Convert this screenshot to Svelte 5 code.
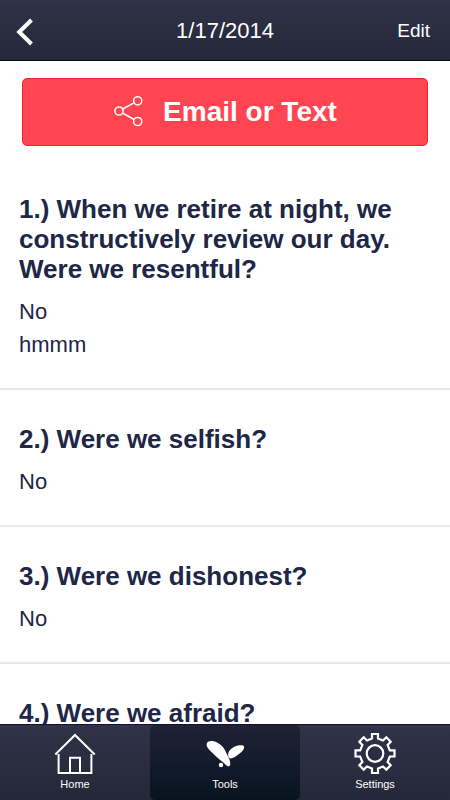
<script lang="ts">
  interface Question {
    id: number;
    text: string;
    answers: string[];
  }

  let date = '1/17/2014';
  let activeTab = 'Tools';

  const questions: Question[] = [
    {
      id: 1,
      text: 'When we retire at night, we constructively review our day. Were we resentful?',
      answers: ['No', 'hmmm'],
    },
    { id: 2, text: 'Were we selfish?', answers: ['No'] },
    { id: 3, text: 'Were we dishonest?', answers: ['No'] },
    { id: 4, text: 'Were we afraid?', answers: [] },
  ];

  const tabs = ['Home', 'Tools', 'Settings'];
</script>

<div class="screen">
  <header>
    <button class="back" aria-label="Back">
      <svg viewBox="0 0 18 28" fill="none" stroke="currentColor" stroke-width="4">
        <path d="M15.5 2 3.2 14 15.5 26" />
      </svg>
    </button>
    <h1>{date}</h1>
    <button class="edit">Edit</button>
  </header>

  <main>
    <button class="share">
      <svg viewBox="0 0 30 32" fill="none" stroke="currentColor" stroke-width="1.5">
        <circle cx="6" cy="15" r="4.1" />
        <circle cx="24.7" cy="4.8" r="4.1" />
        <circle cx="24.7" cy="25.5" r="4.1" />
        <path d="M9.7 13 21 6.8M9.7 17.1 21 23.5" />
      </svg>
      <span>Email or Text</span>
    </button>

    {#each questions as question (question.id)}
      <section>
        <h2>{question.id}.) {question.text}</h2>
        {#each question.answers as answer}
          <p>{answer}</p>
        {/each}
      </section>
    {/each}
  </main>

  <nav>
    {#each tabs as tab}
      <button class="tab" class:active={activeTab === tab} on:click={() => (activeTab = tab)}>
        {#if tab === 'Home'}
          <svg viewBox="0 0 44 44" fill="none" stroke="currentColor" stroke-width="2">
            <path d="M2.3 23.5 22 4 41.7 23.5" />
            <path d="M5.6 23V42H38.4V23" />
            <path d="M17 42V26.8H27V42" />
          </svg>
        {:else if tab === 'Tools'}
          <svg viewBox="0 0 44 44" fill="currentColor">
            <path d="M3.6 13C4.2 10 7.5 9.8 9.5 10C13 10.4 18.5 13.5 21 17.5C23 21 24.3 24 25.6 26.5C27.3 30 27.8 33.3 26.6 35C25.4 36 23.7 34.8 22.3 33.4C19.5 30.5 14.5 27 10.3 22.7C7 19.5 3.2 16.5 3.6 13Z" />
            <path d="M41.1 15.8C41.5 19 37.5 22.2 34 24.6C31.5 26.6 28.5 28.2 26.5 27C24.6 25.5 24.8 21.5 26.8 19.2C29.5 16.3 33 14.8 36.5 14.3C38.5 14 40.8 14.2 41.1 15.8Z" />
            <circle cx="18" cy="34" r="2.2" />
          </svg>
        {:else}
          <svg viewBox="0 0 44 44" fill="none" stroke="currentColor" stroke-width="2.2">
            <circle cx="22" cy="22.5" r="8.3" />
            <path
              d="M19 3H25V7.4L30 9.5L33.3 6.3L37.7 10.7L34.6 14L36.8 19.3H41.5V25.5H36.8L34.6 31L37.7 34.2L33.3 38.6L30 35.5L25 37.6V42H19V37.6L14 35.5L10.7 38.6L6.3 34.2L9.4 31L7.2 25.5H2.5V19.3H7.2L9.4 14L6.3 10.7L10.7 6.3L14 9.5L19 7.4Z"
            />
          </svg>
        {/if}
        <span>{tab}</span>
      </button>
    {/each}
  </nav>
</div>

<style>
  :global(body) {
    margin: 0;
    background: #fff;
  }

  .screen {
    display: flex;
    flex-direction: column;
    height: 100vh;
    color: #202645;
    font-family: 'Liberation Sans', Arial, sans-serif;
  }

  button {
    margin: 0;
    border: none;
    background: none;
    color: #fff;
    font-family: inherit;
    cursor: pointer;
  }

  svg {
    display: block;
    flex-shrink: 0;
  }

  header {
    display: grid;
    grid-template-columns: 1fr auto 1fr;
    align-items: center;
    height: 60px;
    flex-shrink: 0;
    border-bottom: 1px solid #05060f;
    background: linear-gradient(#303349, #252838);
    color: #fff;
  }

  h1 {
    margin: 0;
    font-size: 22px;
    font-weight: 400;
    line-height: 62px;
  }

  .back {
    justify-self: start;
    padding: 2px 16px 0;
  }

  .back svg {
    width: 18px;
    height: 28px;
  }

  .edit {
    justify-self: end;
    padding: 0 20px;
    font-size: 19px;
    line-height: 60px;
  }

  main {
    flex: 1;
    min-height: 0;
    overflow-y: auto;
    scrollbar-width: none;
  }

  .share {
    display: flex;
    align-items: center;
    justify-content: center;
    gap: 20px;
    width: calc(100% - 44px);
    height: 68px;
    margin: 17px 22px 14px;
    padding: 0;
    border: 1px solid #fb2138;
    border-radius: 5px;
    background: #ff4452;
    font-size: 28px;
    font-weight: 700;
  }

  .share svg {
    width: 30px;
    height: 32px;
  }

  section {
    padding: 34px 19px 27px;
    border-bottom: 2px solid #e8e8e8;
  }

  h2 {
    margin: 0 0 11px;
    font-size: 26px;
    font-weight: 700;
    line-height: 30px;
  }

  p {
    margin: 0;
    font-size: 22px;
    line-height: 33px;
  }

  nav {
    display: grid;
    grid-template-columns: repeat(3, 1fr);
    flex-shrink: 0;
    height: 75px;
    border-top: 1px solid #10132a;
    background: linear-gradient(#303349, #252838);
  }

  .tab {
    display: flex;
    flex-direction: column;
    align-items: center;
    gap: 2px;
    padding: 6px 0 0;
    border-radius: 5px;
    font-size: 11px;
    line-height: 14px;
  }

  .tab.active {
    background: linear-gradient(#202236, #071420);
  }

  .tab svg {
    width: 44px;
    height: 44px;
  }
</style>
